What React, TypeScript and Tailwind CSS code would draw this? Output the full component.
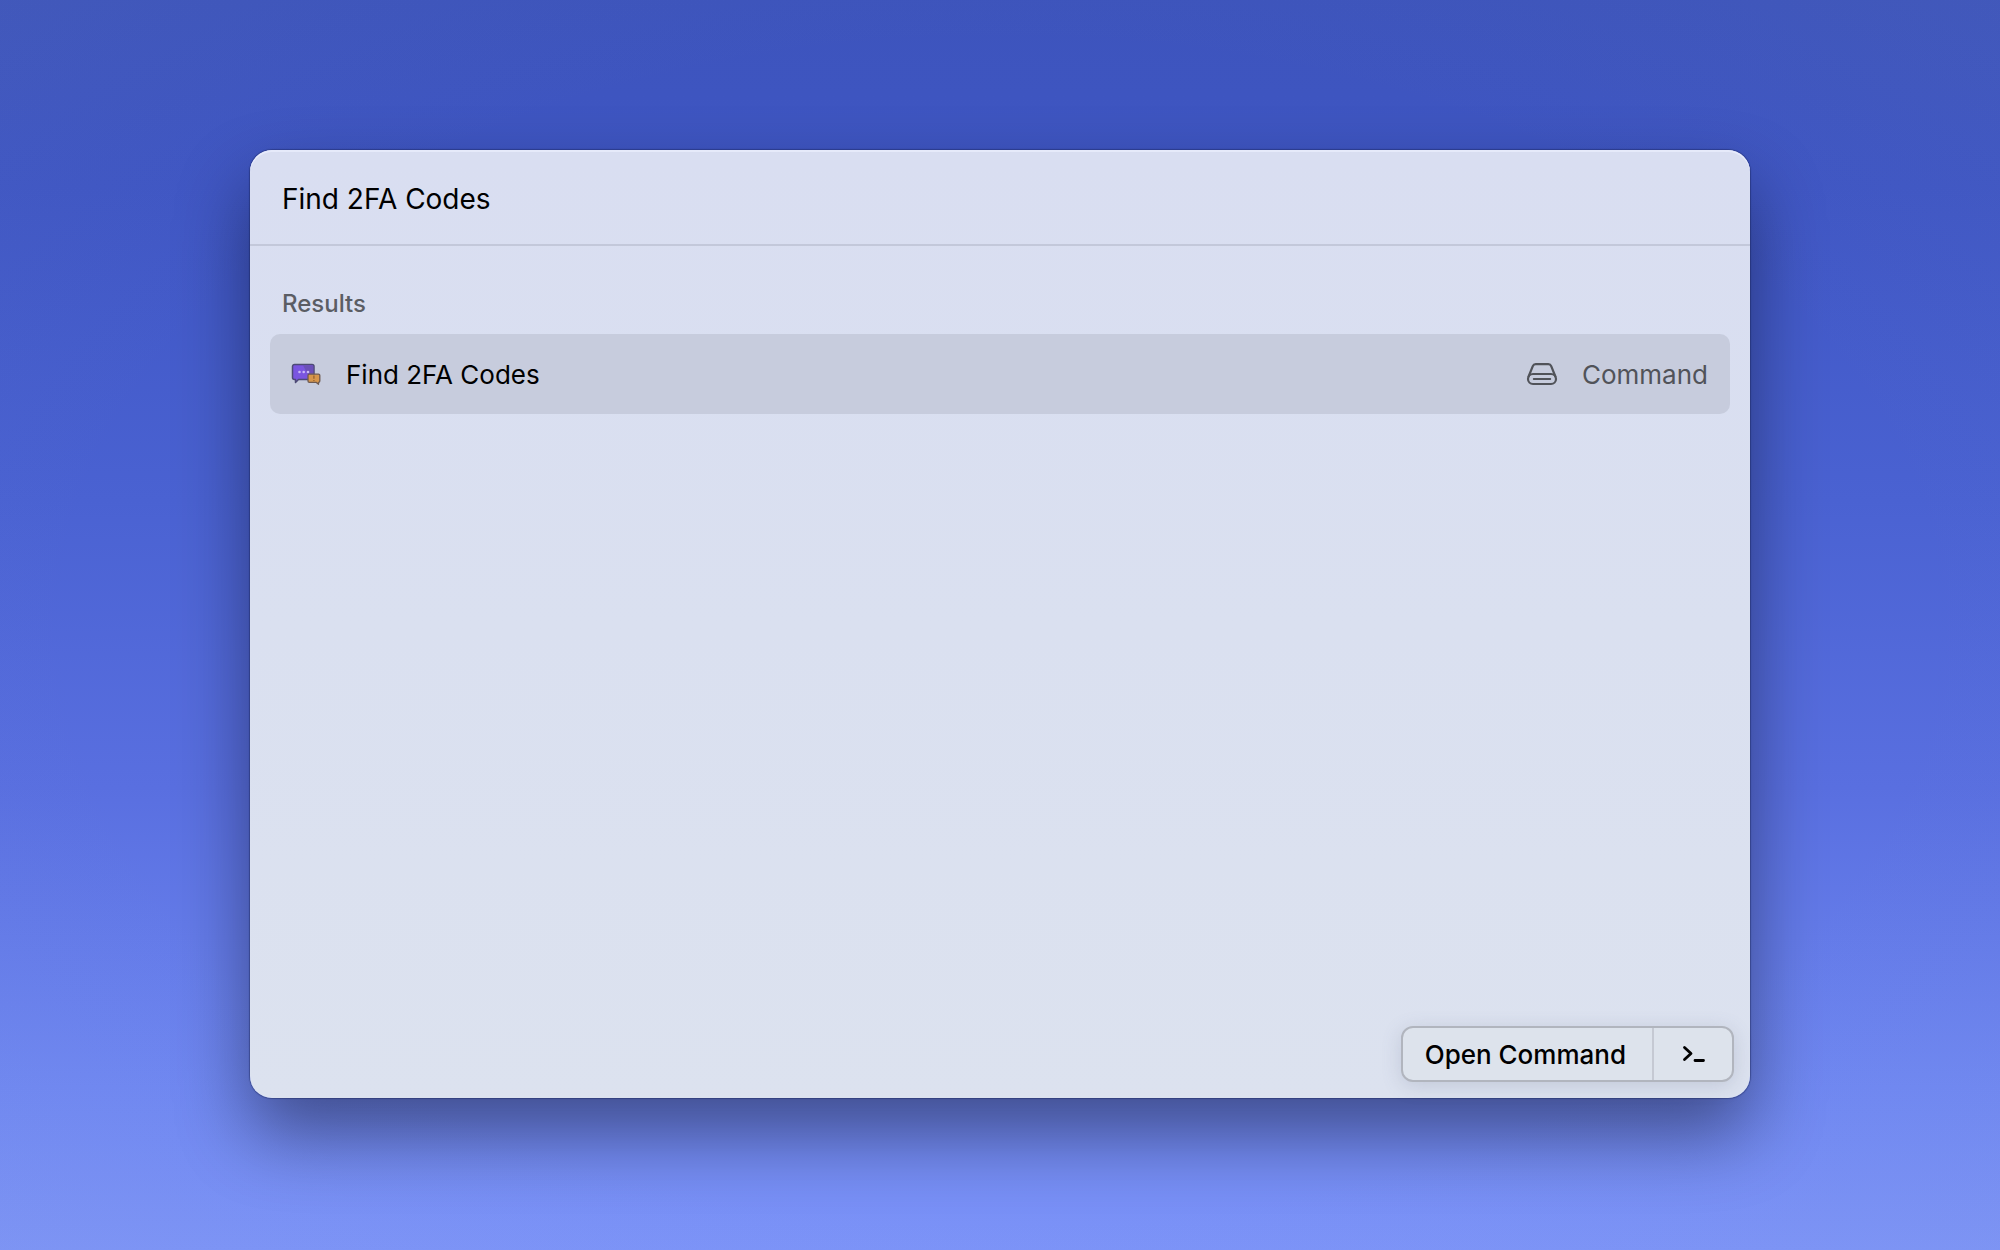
function MessagesIcon() {
  return (
    <svg className="h-8 w-8 shrink-0" viewBox="0 0 32 32" fill="none" aria-hidden="true">
      <path
        d="M4.500 6.500H22a2 2 0 0 1 2 2v11a2 2 0 0 1-2 2H8.500l-3 3v-3h-1a2 2 0 0 1-2-2v-11a2 2 0 0 1 2-2Z"
        fill="#7a55e0"
        stroke="#4d4a75"
        strokeWidth="1.500"
        strokeLinejoin="round"
      />
      <path d="M13 7.300h9.200a1 1 0 0 1 1 1V16h-5.700Z" fill="#6b50b8" />
      <g fill="#c9b8f7">
        <circle cx="9.500" cy="14" r="1.300" />
        <circle cx="13.700" cy="14" r="1.300" />
        <circle cx="18" cy="14" r="1.300" />
      </g>
      <path
        d="M19.300 16.200h9.200a1.300 1.300 0 0 1 1.300 1.300v5.500a1.300 1.300 0 0 1-1.300 1.300v2l-2.500-2h-6.700a1.300 1.300 0 0 1-1.300-1.300v-5.500a1.300 1.300 0 0 1 1.300-1.300Z"
        fill="#d6964c"
        stroke="#6e5a50"
        strokeWidth="1.300"
        strokeLinejoin="round"
      />
      <path d="M23.900 17.500v3.200M23.900 21.900v1.200" stroke="#96622c" strokeWidth="1.300" />
    </svg>
  );
}

function DriveIcon() {
  return (
    <svg
      className="h-8 w-8 shrink-0"
      viewBox="0 0 32 32"
      fill="none"
      stroke="currentColor"
      strokeWidth="2.200"
      strokeLinecap="round"
      strokeLinejoin="round"
      aria-hidden="true"
    >
      <path d="M2.600 18.500 6.800 8.100A3.100 3.100 0 0 1 9.700 6.100h12.600a3.100 3.100 0 0 1 2.900 2l4.200 10.400" />
      <rect x="2" y="16" width="28" height="10" rx="5" />
      <path d="M7.700 21h16.600" strokeWidth="1.800" />
    </svg>
  );
}

function TerminalIcon() {
  return (
    <svg
      className="h-6 w-6"
      viewBox="0 0 24 24"
      fill="none"
      stroke="currentColor"
      strokeWidth="2.800"
      strokeLinecap="round"
      strokeLinejoin="round"
      aria-hidden="true"
    >
      <path d="m3.500 5.500 6.500 6-6.500 6M14 18.500h8.500" />
    </svg>
  );
}

export default function App() {
  return (
    <div className="flex min-h-screen flex-col bg-[radial-gradient(ellipse_at_center,transparent_65%,rgba(150,170,160,0.05)_100%),linear-gradient(to_bottom,#3d54bc_0%,#3f56c4_15%,#4a62d2_40%,#596fe0_63%,#6f87f2_87%,#7c93f8_100%)] px-[12.5%] pt-[150px] pb-[152px] font-['Inter',sans-serif] text-black">
      <main className="flex flex-1 flex-col rounded-[22px] bg-linear-to-b from-[#d9def1] via-[#dae0f0] to-[#dce2ef] shadow-[inset_0_2px_0_#e6eafa,0_0_1px_1px_rgba(20,30,80,0.4),0_36px_72px_rgba(0,0,10,0.43)]">
        <header className="border-b-2 border-[#c3c8da] px-8 pt-[26px] pb-[22px]">
          <input
            type="text"
            aria-label="Search"
            defaultValue="Find 2FA Codes"
            className="block h-[46px] w-full bg-transparent text-[28px] outline-none"
          />
        </header>

        <section className="flex-1 px-5 pt-10" aria-labelledby="results">
          <h2 id="results" className="px-3 text-2xl leading-9 font-medium text-[#5b5d64]">
            Results
          </h2>
          <ul className="mt-3">
            <li>
              <button
                type="button"
                className="flex h-20 w-full items-center rounded-[10px] bg-[#c7ccdd] pr-[22px] pl-5 text-[26px]"
              >
                <MessagesIcon />
                <span className="ml-6">Find 2FA Codes</span>
                <span className="ml-auto flex items-center gap-6 text-[#515359]">
                  <DriveIcon />
                  Command
                </span>
              </button>
            </li>
          </ul>
        </section>

        <footer className="flex justify-end p-4">
          <div className="flex h-14 rounded-xl border-2 border-[#b1b5be] bg-[#dde3ec] shadow-[0_4px_20px_rgba(90,100,130,0.2)]">
            <button type="button" className="border-r-2 border-[#c5c9d3] pr-[26px] pl-[22px] text-[26px] font-medium">
              Open Command
            </button>
            <button type="button" aria-label="Terminal" className="flex w-[78px] items-center justify-center">
              <TerminalIcon />
            </button>
          </div>
        </footer>
      </main>
    </div>
  );
}
